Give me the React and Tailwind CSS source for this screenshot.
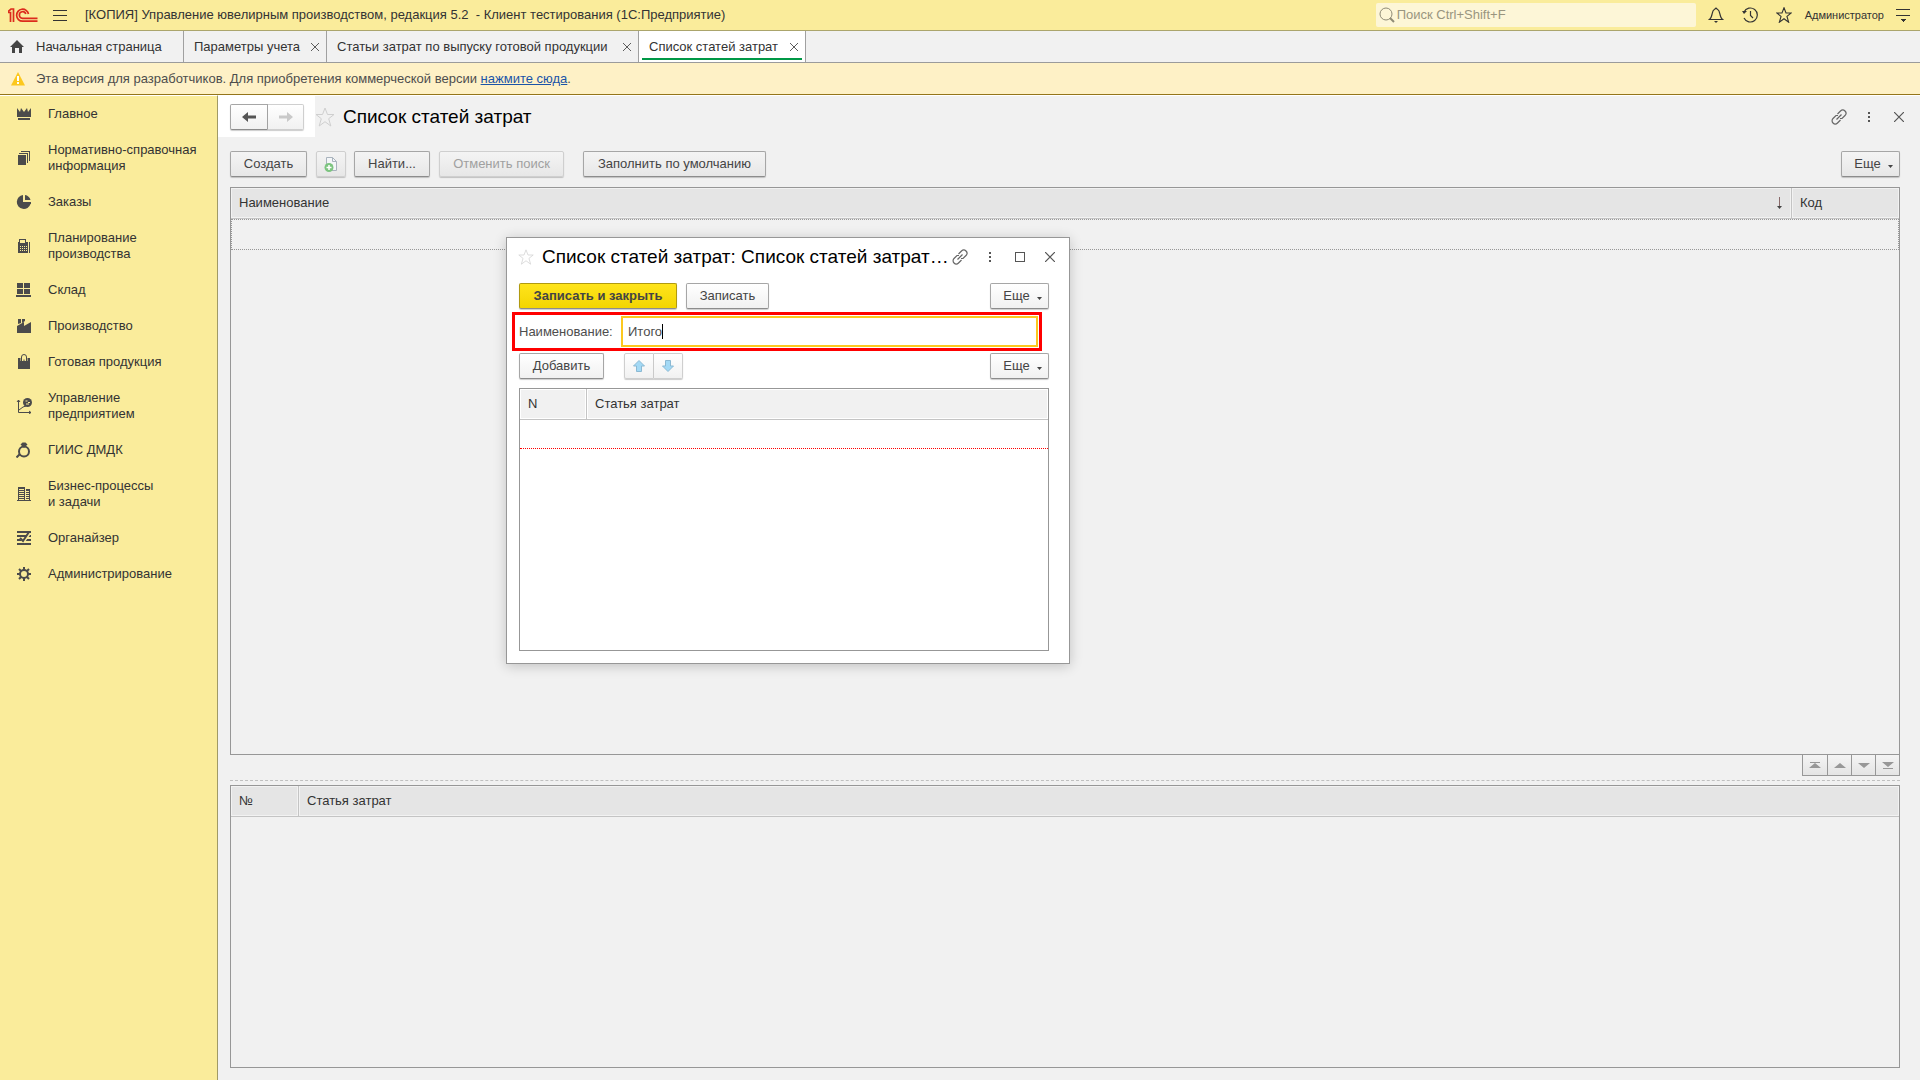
const FONT = "font-['Liberation_Sans',Arial,sans-serif]";

const MENU = [
  { icon: "crown", lines: ["Главное"] },
  { icon: "sheets", lines: ["Нормативно-справочная", "информация"] },
  { icon: "pie", lines: ["Заказы"] },
  { icon: "calc", lines: ["Планирование", "производства"] },
  { icon: "boxes", lines: ["Склад"] },
  { icon: "factory", lines: ["Производство"] },
  { icon: "bag", lines: ["Готовая продукция"] },
  { icon: "chart", lines: ["Управление", "предприятием"] },
  { icon: "ring", lines: ["ГИИС ДМДК"] },
  { icon: "building", lines: ["Бизнес-процессы", "и задачи"] },
  { icon: "organizer", lines: ["Органайзер"] },
  { icon: "gear", lines: ["Администрирование"] },
];

const TABS = [
  { label: "Параметры учета", width: "w-[143px]" },
  { label: "Статьи затрат по выпуску готовой продукции", width: "w-[312px]" },
  { label: "Список статей затрат", width: "w-[167px]", active: true },
];

const SHAPES = {
  crown: <path d="M1 2l3 4 1-4 3 4 3-4 1 4 3-4v9H1zM2 12h12v2H2z" />,
  sheets: (
    <path d="M2 5h8v10H2zM3 3h9v10h-1V4H3zM5 1h9v10h-1V2H5z" shapeRendering="crispEdges" />
  ),
  pie: (
    <>
      <path d="M7 1a7 7 0 1 0 7.500 9H7z" />
      <path d="M9 1v5h5.500A7 7 0 0 0 9 1zM7 8h8v2H7z" />
    </>
  ),
  calc: (
    <>
      <path
        fillRule="evenodd"
        shapeRendering="crispEdges"
        d="M3 1h7v3h2v11H2V4h1zM4 2v3h5V2zM4 8v1h1V8zM6 8v1h1V8zM8 8v1h1V8zM10 8v1h1V8zM4 10v1h1v-1zM6 10v1h1v-1zM8 10v1h1v-1zM10 10v1h1v-1zM4 12v1h1v-1zM6 12v1h1v-1zM8 12v1h1v-1zM10 12v1h1v-1z"
      />
      <path d="M13 4h1v11h-1z" shapeRendering="crispEdges" />
    </>
  ),
  boxes: (
    <path d="M1 1h6v5H1zM8 1h6v5H8zM1 7h6v5H1zM8 7h6v5H8zM0 13h15v2H0z" shapeRendering="crispEdges" />
  ),
  factory: <path d="M2 1h3v4l-3 1zM6 1h3v2L6 5zM1 15V8l7-4v4l7-4v11z" />,
  bag: (
    <>
      <path d="M2 4h12v11H2z" />
      <path d="M6 7V4h4v3" fill="none" stroke="#faec9b" strokeWidth="3" />
      <path d="M5.500 7V3a2.500 2.500 0 0 1 5 0v4" fill="none" stroke="#4b4b4b" />
    </>
  ),
  chart: (
    <>
      <path
        d="M2.500 2v12.500H15M1 4l1.500-2L4 4M13 13l2 1.500L13 16M3 12l4-3 3-1"
        fill="none"
        stroke="#4b4b4b"
      />
      <circle cx="11.500" cy="4.500" r="4.500" />
      <path d="M9.500 2.500h2v1h-2zM12 4h2v1h-2zM10 5.500h3v1h-3z" fill="#faec9b" />
    </>
  ),
  ring: (
    <>
      <circle cx="8" cy="9.500" r="5" fill="none" stroke="#4b4b4b" strokeWidth="2" />
      <path d="M4.500 2.500l2-2h3l2 2L8 6z" />
      <path d="M4 12l-3.500 3.500" stroke="#4b4b4b" strokeWidth="2" />
    </>
  ),
  building: (
    <>
      <path d="M2 1h7v14H2zM10 3h4v12h-4zM1 14h14v1H1z" shapeRendering="crispEdges" />
      <path
        d="M3 3.500h5M3 5.500h5M3 7.500h5M3 9.500h5M3 11.500h5M3 13.500h5M10 5.500h3M10 7.500h3M10 9.500h3M10 11.500h3M10 13.500h3"
        stroke="#faec9b"
        shapeRendering="crispEdges"
      />
    </>
  ),
  organizer: (
    <>
      <path d="M1 1h14v2H1zM1 5h14v2H1zM1 9h14v2H1zM1 13h14v2H1z" shapeRendering="crispEdges" />
      <path d="M5 8l3 3 5-7" fill="none" stroke="#faec9b" strokeWidth="3" />
      <path d="M4 8l3 3 6-9" fill="none" stroke="#4b4b4b" strokeWidth="2" />
    </>
  ),
  gear: (
    <>
      <circle cx="8" cy="8" r="4" fill="none" stroke="#4b4b4b" strokeWidth="2" />
      <path
        d="M8 1v3M8 12v3M1 8h3M12 8h3M3 3l2 2M11 11l2 2M3 13l2-2M11 5l2-2"
        stroke="#4b4b4b"
        strokeWidth="2"
      />
    </>
  ),
};

const MenuIcon = ({ name }) => (
  <svg viewBox="0 0 16 16" className="size-4 shrink-0 fill-[#4b4b4b]" aria-hidden="true">
    {SHAPES[name]}
  </svg>
);

const Logo = () => (
  <svg
    viewBox="0 0 30 15"
    className="h-[15px] w-[30px]"
    fill="none"
    stroke="#dc2b1c"
    strokeWidth="1.700"
    aria-label="1С"
  >
    <path d="M0 3.500l3-2.500h2.500v13M0 4.500h2.500V14" />
    <path d="M20.500 6a6 6 0 1 0-6 7.200h15" />
    <path d="M17.800 6a3.300 3.300 0 1 0-3.300 4.300h15" />
  </svg>
);

const Star = ({ className }) => (
  <svg viewBox="0 0 20 20" className={className} fill="none" aria-hidden="true">
    <path d="M10 1l2.500 6.500H19l-5.300 4.200L15.800 19 10 14.700 4.200 19l2.100-7.300L1 7.500h6.500z" />
  </svg>
);

const LinkIcon = () => (
  <svg viewBox="0 0 16 16" className="size-4" fill="none" stroke="#666" strokeWidth="1.200" aria-hidden="true">
    <path d="M6.500 5L9.500 2a2.800 2.800 0 0 1 4.500 4.500l-3 3H9M9.500 11l-3 3A2.800 2.800 0 0 1 2 9.500l3-3h2M5.500 10.500l5-5" />
  </svg>
);

const Dots = () => (
  <svg viewBox="0 0 16 16" className="size-4 fill-[#555]" shapeRendering="crispEdges" aria-hidden="true">
    <path d="M7 3h2v2H7zM7 7h2v2H7zM7 11h2v2H7z" />
  </svg>
);

const Cross = ({ className = "size-[10px]" }) => (
  <svg viewBox="0 0 10 10" className={className} fill="none" stroke="#555" strokeWidth="1.200" aria-hidden="true">
    <path d="M0 0l10 10M10 0L0 10" />
  </svg>
);

const Button = ({ children, className = "", disabled }) => (
  <button
    type="button"
    disabled={disabled}
    className={`flex h-[26px] items-center justify-center rounded-[2px] border whitespace-nowrap shadow-[0_1px_1px_#0003] ${
      disabled ? "border-[#cfcfcf] text-[#a0a0a0]" : "border-[#a6a6a6] border-b-[#8c8c8c] text-[#444]"
    } ${className}`}
  >
    {children}
  </button>
);

const GRAY = "bg-linear-to-b from-[#f4f4f4] to-[#e7e7e7]";
const WHITE = "bg-linear-to-b from-white to-[#f1f1f1]";

const MoreButton = ({ className }) => (
  <Button className={`w-[59px] gap-[7px] pl-[6px] ${className}`}>
    Еще
    <svg viewBox="0 0 5 3" className="mt-1 h-[3px] w-[5px] fill-[#444]" aria-hidden="true">
      <path d="M0 0h5L2.500 3z" />
    </svg>
  </Button>
);

const TopBar = () => (
  <header className="flex h-[31px] shrink-0 items-center border-b border-[#aba56c] bg-[#faec9b] pr-[10px] pl-2 text-[#333]">
    <Logo />
    <button type="button" aria-label="Меню" className="ml-[15px]">
      <svg viewBox="0 0 14 11" className="h-[11px] w-[14px]" stroke="#333" shapeRendering="crispEdges">
        <path d="M0 .5h14M0 5.500h14M0 10.500h14" />
      </svg>
    </button>
    <span className="ml-[18px] whitespace-pre">
      [КОПИЯ] Управление ювелирным производством, редакция 5.2  - Клиент тестирования (1С:Предприятие)
    </span>
    <label className="ml-auto flex h-6 w-80 items-center gap-[2px] rounded-[2px] bg-[#fdf6d7] px-[3px]">
      <svg viewBox="0 0 16 16" className="size-4 shrink-0" fill="none" stroke="#8f8b76" aria-hidden="true">
        <circle cx="7" cy="7" r="6" />
        <path d="M11 11l4 4" strokeWidth="2" />
      </svg>
      <input
        type="search"
        aria-label="Поиск"
        placeholder="Поиск Ctrl+Shift+F"
        className="w-full bg-transparent outline-none placeholder:text-[#99957f]"
      />
    </label>
    <button type="button" aria-label="Уведомления" className="ml-3">
      <svg viewBox="0 0 16 16" className="size-4" fill="none" stroke="#333" strokeWidth="1.200">
        <path d="M1.500 12.500C5 10 3.500 3 6.500 2.500L8 1l1.500 1.500c3 .5 1.500 7.500 5 10z" />
        <path d="M6 14h4l-2 2z" fill="#333" stroke="none" />
      </svg>
    </button>
    <button type="button" aria-label="История" className="ml-[18px]">
      <svg viewBox="0 0 16 16" className="size-4" fill="none" stroke="#333" strokeWidth="1.200">
        <path d="M2 5a7 7 0 1 1 0 6M8.500 4v4.500L11 11" />
        <path d="M0 4h5L2 7z" fill="#333" stroke="none" />
      </svg>
    </button>
    <button type="button" aria-label="Избранное" className="ml-[18px]">
      <Star className="size-4 stroke-[#333] stroke-[1.400]" />
    </button>
    <button type="button" className="ml-[13px] text-[11px]">
      Администратор
    </button>
    <button type="button" aria-label="Настройки" className="ml-3">
      <svg viewBox="0 0 14 13" className="h-[13px] w-[14px]" stroke="#333" shapeRendering="crispEdges">
        <path d="M0 .5h14M0 6.500h14" />
        <path d="M4 10h6l-3 3z" fill="#333" stroke="none" />
      </svg>
    </button>
  </header>
);

const TabBar = () => (
  <nav className="flex h-8 shrink-0 border-b border-[#9b9b9b] bg-[#f1f1f1] text-[#333]">
    <button type="button" className="flex w-[184px] items-center gap-3 border-r border-[#a0a0a0] pl-[10px]">
      <svg viewBox="0 0 14 13" className="h-[13px] w-[14px] fill-[#444]" aria-hidden="true">
        <path d="M7 0l7 7h-2v6H9V8H5v5H2V7H0z" />
      </svg>
      Начальная страница
    </button>
    {TABS.map((tab) => (
      <div
        key={tab.label}
        className={`relative flex items-center justify-between border-r border-[#a0a0a0] pr-[7px] pl-[10px] whitespace-nowrap ${
          tab.width
        } ${tab.active ? "bg-white" : ""}`}
      >
        <button type="button">{tab.label}</button>
        <button type="button" aria-label="Закрыть">
          <Cross className="size-2" />
        </button>
        {tab.active && <span className="absolute inset-x-[3px] bottom-[2px] h-[2px] bg-[#009846]" />}
      </div>
    ))}
  </nav>
);

const Notice = () => (
  <div className="flex h-8 shrink-0 items-center border-b border-[#94751a] bg-[#fef1c6] pl-[11px] text-[#4d4d4d]">
    <svg viewBox="0 0 14 14" className="mr-[11px] size-[14px]" aria-hidden="true">
      <path d="M7 0l7 13.500H0z" fill="#fcc81e" />
      <path d="M6 4h2v5H6zM6 10h2v2H6z" fill="#fff" />
    </svg>
    <p>
      Эта версия для разработчиков. Для приобретения коммерческой версии{" "}
      <a href="#buy" className="text-[#1a54a8] underline">
        нажмите сюда
      </a>
      .
    </p>
  </div>
);

const Sidebar = () => (
  <aside className="w-[218px] shrink-0 border-t border-r border-t-white border-r-[#a09a66] bg-[#faec9b] text-[#333]">
    {MENU.map((item) => (
      <a key={item.icon} href={`#${item.icon}`} className="flex items-center gap-4 py-[10px] pl-4 leading-4">
        <MenuIcon name={item.icon} />
        <span>
          {item.lines.map((line) => (
            <span key={line} className="block">
              {line}
            </span>
          ))}
        </span>
      </a>
    ))}
  </aside>
);

const Th = ({ children, className = "" }) => (
  <th className={`h-[31px] border-b border-[#c4c4c4] px-2 text-left font-normal text-[#333] ${className}`}>
    {children}
  </th>
);

const TABLE = "w-full table-fixed border-separate border-spacing-0";
const HEAD_GRAY = "bg-[#e5e5e5] shadow-[inset_0_0_0_1px_#f2f2f2]";
const HEAD_LIGHT = "bg-[#f1f1f1] shadow-[inset_0_0_0_1px_#fff]";

const SCROLLERS = [
  { name: "В начало", d: "M2 0h10v1H2zM7 1l6 5H1z" },
  { name: "Вверх", d: "M7 1l6 5H1z" },
  { name: "Вниз", d: "M1 1h12L7 6z" },
  { name: "В конец", d: "M1 0h12L7 5zM2 6h10v1H2z" },
];

const CostList = () => (
  <section className="min-h-0 grow-2 basis-[6px] border border-[#979797]">
    <table className={TABLE}>
      <thead>
        <tr>
          <Th className={`border-r ${HEAD_GRAY}`}>
            <span className="flex items-center justify-between">
              Наименование
              <svg viewBox="0 0 7 12" className="h-3 w-[7px]" aria-label="По возрастанию">
                <path d="M3.500 0v10" stroke="#8a6a6a" />
                <path d="M1 9h5l-2.500 3z" fill="#444" />
              </svg>
            </span>
          </Th>
          <Th className={`w-[107px] ${HEAD_GRAY}`}>Код</Th>
        </tr>
      </thead>
      <tbody>
        <tr>
          <td colSpan={2} className="h-[31px] border border-dotted border-[#979797]" />
        </tr>
      </tbody>
    </table>
  </section>
);

const CostItems = () => (
  <section className="min-h-0 grow basis-0 border border-[#979797]">
    <table className={TABLE}>
      <thead>
        <tr>
          <Th className={`w-[68px] border-r ${HEAD_GRAY}`}>№</Th>
          <Th className={HEAD_GRAY}>Статья затрат</Th>
        </tr>
      </thead>
    </table>
  </section>
);

const MoveArrow = ({ down }) => (
  <svg viewBox="0 0 12 12" className={`size-3 ${down ? "rotate-180" : ""}`} aria-hidden="true">
    <path d="M6 .5L11.500 6H8.500v5.500h-5V6H.5z" fill="#a3d9f5" stroke="#8bb9d3" />
  </svg>
);

const Dialog = () => (
  <div
    role="dialog"
    aria-label="Список статей затрат"
    className="absolute top-[237px] left-[506px] w-[564px] border border-[#979797] bg-white pr-5 pb-3 pl-3 shadow-[0_2px_12px_#0003]"
  >
    <div className="-ml-px flex h-[38px] items-center">
      <Star className="size-4 shrink-0 stroke-[#d4d4d4]" />
      <h2 className="ml-2 w-0 grow text-[19px] whitespace-nowrap text-black">
        Список статей затрат: Список статей затрат…
      </h2>
      <div className="-mr-[6px] flex shrink-0 items-center">
        <button type="button" aria-label="Ссылка">
          <LinkIcon />
        </button>
        <button type="button" aria-label="Меню" className="ml-[14px]">
          <Dots />
        </button>
        <button type="button" aria-label="Развернуть" className="ml-[17px] size-[10px] border border-[#555]" />
        <button type="button" aria-label="Закрыть" className="ml-5">
          <Cross />
        </button>
      </div>
    </div>
    <div className="mt-[7px] flex gap-[9px]">
      <Button className="w-[158px] border-[#b09a10] bg-linear-to-b from-[#ffe41a] to-[#f3d500] font-bold">
        Записать и закрыть
      </Button>
      <Button className={`w-[83px] ${WHITE}`}>Записать</Button>
      <MoreButton className={`ml-auto ${WHITE}`} />
    </div>
    <div className="mt-[3px] mr-[7px] -ml-[7px] flex h-[39px] items-center border-3 border-[#ff0000] pr-[1px] pl-1 text-[#4d4d4d]">
      <label htmlFor="name" className="w-[102px] shrink-0">
        Наименование:
      </label>
      <div className="relative h-[31px] grow">
        <input
          id="name"
          type="text"
          defaultValue="Итого"
          className="h-full w-full border-2 border-[#fcc81e] bg-white px-[5px] outline-none"
        />
        <span className="absolute top-2 left-[41px] h-[15px] w-px bg-black" />
      </div>
    </div>
    <div className="mt-[2px] flex">
      <Button className={`w-[85px] ${WHITE}`}>Добавить</Button>
      <Button disabled className={`ml-5 w-[30px] rounded-r-none ${WHITE}`}>
        <MoveArrow />
      </Button>
      <Button disabled className={`w-[29px] rounded-l-none border-l-0 ${WHITE}`}>
        <MoveArrow down />
      </Button>
      <MoreButton className={`ml-auto ${WHITE}`} />
    </div>
    <div className="mt-[9px] h-[263px] border border-[#979797]">
      <table className={TABLE}>
        <thead>
          <tr>
            <Th className={`w-[67px] border-r ${HEAD_LIGHT}`}>N</Th>
            <Th className={HEAD_LIGHT}>Статья затрат</Th>
          </tr>
        </thead>
        <tbody>
          <tr>
            <td colSpan={2} className="h-[29px] border-b border-dotted border-[#ff0000]" />
          </tr>
        </tbody>
      </table>
    </div>
  </div>
);

const App = () => (
  <div className={`relative flex h-screen flex-col overflow-hidden bg-[#f1f1f1] text-[13px] leading-5 ${FONT}`}>
    <TopBar />
    <TabBar />
    <Notice />
    <div className="flex min-h-0 grow">
      <Sidebar />
      <main className="flex min-w-0 grow flex-col border-t border-white pr-5 pb-3">
        <div className="flex h-[41px] items-center">
          <div className="flex h-full w-[97px] items-center bg-white pl-3">
            <Button className={`h-[25px] w-[38px] rounded-r-none ${WHITE}`}>
              <svg viewBox="0 0 14 10" className="h-[10px] w-[14px] fill-[#555]" aria-label="Назад">
                <path d="M0 5l6-5v3.500h8v3H6V10z" />
              </svg>
            </Button>
            <Button disabled className={`h-[25px] w-9 rounded-l-none border-l-0 ${WHITE}`}>
              <svg viewBox="0 0 14 10" className="h-[10px] w-[14px] fill-[#c9c9c9]" aria-label="Вперед">
                <path d="M14 5L8 0v3.500H0v3h8V10z" />
              </svg>
            </Button>
          </div>
          <Star className="size-5 stroke-[#cfcfcf]" />
          <h1 className="ml-2 text-[19px] text-black">Список статей затрат</h1>
          <div className="-mr-1 ml-auto flex items-center">
            <button type="button" aria-label="Ссылка">
              <LinkIcon />
            </button>
            <button type="button" aria-label="Меню" className="ml-[14px]">
              <Dots />
            </button>
            <button type="button" aria-label="Закрыть" className="ml-[17px]">
              <Cross />
            </button>
          </div>
        </div>
        <div className="flex min-h-0 grow flex-col pl-3">
          <div className="mt-[14px] mb-[10px] flex">
            <Button className={`w-[77px] ${GRAY}`}>Создать</Button>
            <Button disabled className={`ml-[9px] w-[30px] ${GRAY}`}>
              <svg viewBox="0 0 14 16" className="h-4 w-[14px]" aria-label="Скопировать">
                <path d="M2.500 1.500h6l4 4v9h-10z" fill="#f4f6f8" stroke="#a9b3bd" />
                <path d="M8.500 1.500v4h4" fill="none" stroke="#a9b3bd" />
                <circle cx="5" cy="11.500" r="4.500" fill="#7cc47f" />
                <path d="M2.500 11.500h5M5 9v5" stroke="#fff" strokeWidth="1.500" />
              </svg>
            </Button>
            <Button className={`ml-2 w-[76px] ${GRAY}`}>Найти...</Button>
            <Button disabled className={`ml-[9px] w-[125px] ${GRAY}`}>
              Отменить поиск
            </Button>
            <Button className={`ml-[19px] w-[183px] ${GRAY}`}>Заполнить по умолчанию</Button>
            <MoreButton className={`ml-auto ${GRAY}`} />
          </div>
          <CostList />
          <div className="flex justify-end">
            <div className="flex border-x border-b border-[#979797]">
              {SCROLLERS.map((s) => (
                <button
                  key={s.name}
                  type="button"
                  aria-label={s.name}
                  className="flex h-5 w-6 items-center justify-center border-l border-[#979797] bg-linear-to-b from-[#f4f4f4] to-[#e4e4e4] first:border-l-0"
                >
                  <svg viewBox="0 0 14 7" className="h-[7px] w-[14px] fill-[#979797]" aria-hidden="true">
                    <path d={s.d} />
                  </svg>
                </button>
              ))}
            </div>
          </div>
          <div className="my-1 border-t border-dashed border-[#c0c0c0]" />
          <CostItems />
        </div>
      </main>
    </div>
    <Dialog />
  </div>
);

export default App;
